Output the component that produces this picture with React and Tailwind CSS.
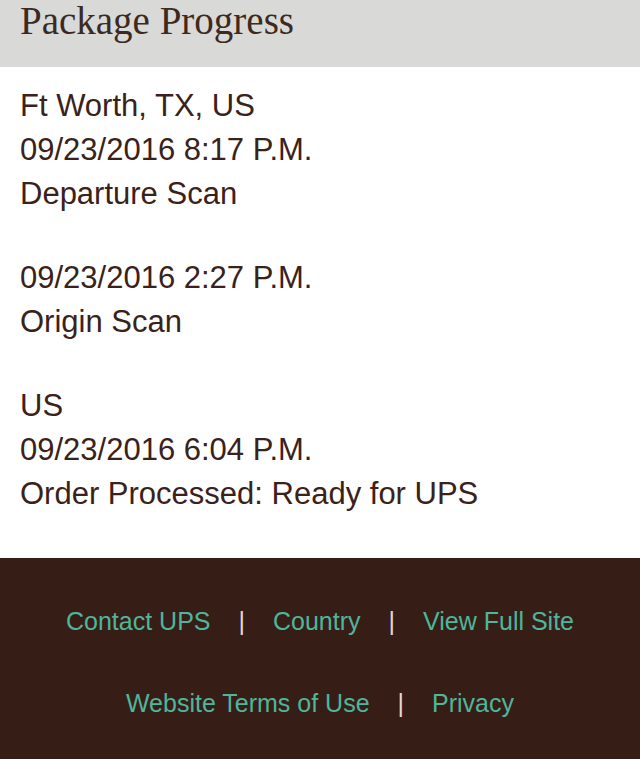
const events = [
  { place: "Ft Worth, TX, US", time: "09/23/2016 8:17 P.M.", status: "Departure Scan" },
  { place: "", time: "09/23/2016 2:27 P.M.", status: "Origin Scan" },
  { place: "US", time: "09/23/2016 6:04 P.M.", status: "Order Processed: Ready for UPS" },
];

const Sep = () => <span className="text-[#e6d6d2] px-[28px]">|</span>;

const FooterLink = ({ children }) => (
  <a href="#" className="text-[#4fb59c]">
    {children}
  </a>
);

export default function App() {
  return (
    <div className="w-[640px] h-[759px] overflow-hidden bg-white">
      <div className="h-[67px] bg-[#d9d9d7] px-5 flex items-start">
        <h1 className="font-['Liberation_Serif',serif] text-[39px] leading-[42px] text-[#3c2a22]">
          Package Progress
        </h1>
      </div>
      <div className="px-5 pt-[17px] pb-[2px] font-['Liberation_Sans',Arial,sans-serif] text-[31px] leading-[44px] text-[#3a221a]">
        {events.map((e, i) => (
          <div key={i} className="mb-[40px]">
            {e.place && <p>{e.place}</p>}
            <p>{e.time}</p>
            <p>{e.status}</p>
          </div>
        ))}
      </div>
      <footer className="bg-[#361e17] h-[201px] pt-[48px] font-['Liberation_Sans',Arial,sans-serif] text-[25px] leading-[30px]">
        <div className="flex justify-center items-center">
          <FooterLink>Contact UPS</FooterLink>
          <Sep />
          <FooterLink>Country</FooterLink>
          <Sep />
          <FooterLink>View Full Site</FooterLink>
        </div>
        <div className="flex justify-center items-center mt-[52px]">
          <FooterLink>Website Terms of Use</FooterLink>
          <Sep />
          <FooterLink>Privacy</FooterLink>
        </div>
      </footer>
    </div>
  );
}
